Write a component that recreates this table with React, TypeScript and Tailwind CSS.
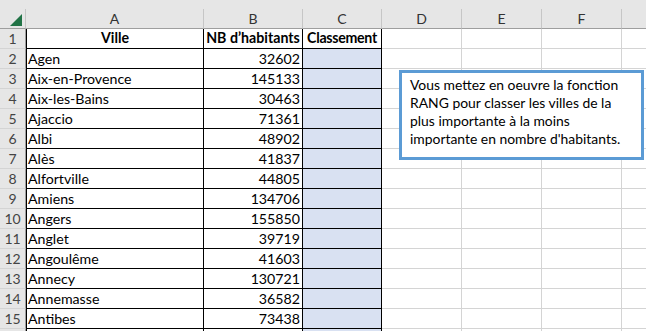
const cities: [string, number][] = [
  ["Agen", 32602],
  ["Aix-en-Provence", 145133],
  ["Aix-les-Bains", 30463],
  ["Ajaccio", 71361],
  ["Albi", 48902],
  ["Alès", 41837],
  ["Alfortville", 44805],
  ["Amiens", 134706],
  ["Angers", 155850],
  ["Anglet", 39719],
  ["Angoulême", 41603],
  ["Annecy", 130721],
  ["Annemasse", 36582],
  ["Antibes", 73438],
];

const letters = ["A", "B", "C", "D", "E", "F", ""];

const rowHead =
  "flex h-5 items-center justify-center border-r border-b border-r-[#9e9e9e] border-b-[#d4d4d4] bg-[#e6e6e6] text-[14px] text-[#444]";
const grid = "h-5 border-r border-b border-[#d4d4d4]";

const Corner = () => (
  <div className="relative h-5 border-r border-b border-r-[#c6c6c6] border-b-[#9e9e9e] bg-[#e6e6e6]">
    <svg className="absolute left-[10px] top-[5px]" width="12" height="12" viewBox="0 0 12 12">
      <polygon points="12,0 12,12 0,12" fill="#217346" />
    </svg>
  </div>
);

const Row = ({ n, children }: { n?: number; children: React.ReactNode }) => (
  <>
    <div className={rowHead}>{n}</div>
    {children}
    <div className={grid} />
    <div className={grid} />
    <div className={grid} />
    <div className={grid} />
  </>
);

export default function App() {
  return (
    <div
      className="relative h-[331px] w-[646px] overflow-hidden bg-white text-black"
      style={{ fontFamily: "Lato, 'Open Sans', sans-serif" }}
    >
      <div className="h-[9px] bg-[#e6e6e6]" />
      <div className="grid grid-cols-[26px_178px_99px_79px_80px_80px_80px_80px] text-[14.2px] leading-none">
        <Corner />
        {letters.map((l, i) => (
          <div
            key={i}
            className="flex h-5 items-center justify-center border-r border-b border-r-[#c6c6c6] border-b-[#9e9e9e] bg-[#e6e6e6] text-[14px] text-[#333]"
          >
            {l}
          </div>
        ))}

        <Row n={1}>
          <div className="flex h-5 items-center justify-center border-x border-b border-black font-bold">Ville</div>
          <div className="flex h-5 items-center justify-center border-r border-b border-black font-bold whitespace-nowrap">
            NB d’habitants
          </div>
          <div className="flex h-5 items-center justify-center border-r border-b border-black font-bold tracking-[-0.3px]">
            Classement
          </div>
        </Row>

        {cities.map(([city, pop], i) => (
          <Row key={city} n={i + 2}>
            <div className="flex h-5 items-center border-x border-b border-black pl-[1px] pt-[1px]">{city}</div>
            <div className="flex h-5 items-center justify-end border-r border-b border-black pr-[2px] pt-[1px]">{pop}</div>
            <div className="h-5 border-r border-b border-black bg-[#d9e1f2]" />
          </Row>
        ))}

        <Row>
          <div className="h-5 border-x border-b border-black" />
          <div className="h-5 border-r border-b border-black" />
          <div className="h-5 border-r border-b border-black bg-[#d9e1f2]" />
        </Row>
      </div>

      <div className="absolute left-[399px] top-[70px] h-[90px] w-[245px] border-[3px] border-[#5b9bd5] bg-white px-[8px] pt-[3px] text-[13.9px] leading-[17.9px] whitespace-nowrap">
        <div>Vous mettez en oeuvre la fonction</div>
        <div>RANG pour classer les villes de la</div>
        <div>plus importante à la moins</div>
        <div>importante en nombre d'habitants.</div>
      </div>
    </div>
  );
}
